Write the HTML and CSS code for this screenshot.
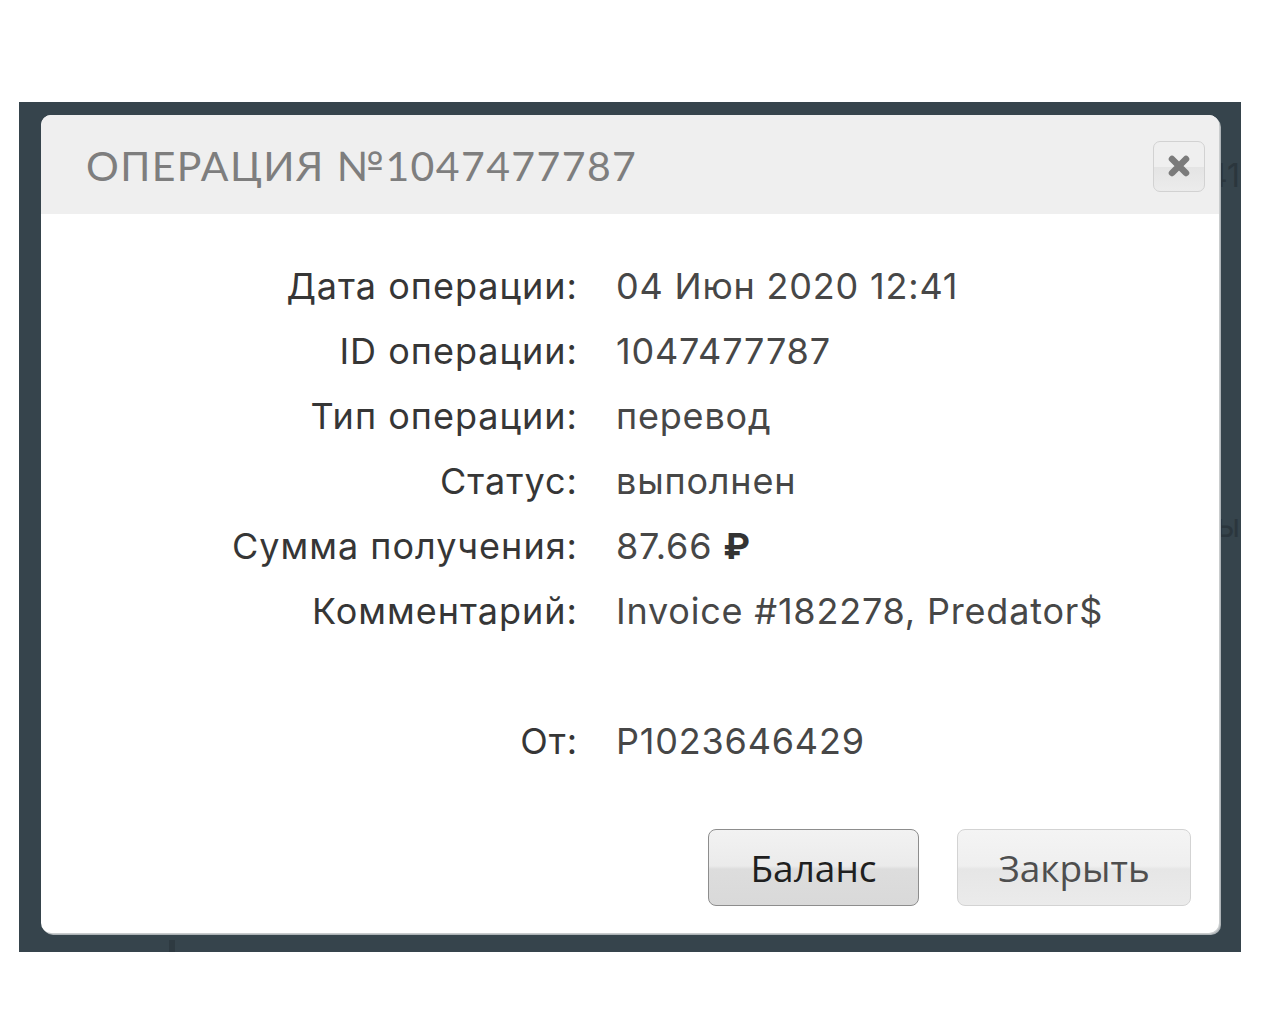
FILE: index.html
```html
<!DOCTYPE html>
<html lang="ru">
<head>
<meta charset="utf-8">
<title>Операция №1047477787</title>
<link rel="stylesheet" href="styles.css">
</head>
<body>
<div class="backdrop">
  <span class="behind behind-a">41</span>
  <span class="behind behind-b">ы</span>
  <span class="behind-mark"></span>
  <div class="dialog">
    <div class="dialog-header">
      <h1 class="dialog-title">Операция №1047477787</h1>
      <button class="close-btn" aria-label="Закрыть">
        <svg width="28" height="28" viewBox="0 0 28 28"><path d="M7 7L21 21M21 7L7 21" stroke="#7b7b7b" stroke-width="6.5" stroke-linecap="round"/></svg>
      </button>
    </div>
    <div class="dialog-body">
      <dl class="details">
        <dt>Дата операции:</dt><dd>04 Июн 2020 12:41</dd>
        <dt>ID операции:</dt><dd>1047477787</dd>
        <dt>Тип операции:</dt><dd>перевод</dd>
        <dt>Статус:</dt><dd>выполнен</dd>
        <dt>Сумма получения:</dt><dd>87.66 <span class="rub">₽</span></dd>
        <dt>Комментарий:</dt><dd>Invoice #182278, Predator$</dd>
        <dt class="empty"></dt><dd class="empty"></dd>
        <dt>От:</dt><dd>P1023646429</dd>
      </dl>
      <div class="actions">
        <button class="btn btn-primary">Баланс</button>
        <button class="btn btn-secondary">Закрыть</button>
      </div>
    </div>
  </div>
</div>
</body>
</html>
```

FILE: styles.css
```css
html, body {
  margin: 0;
  padding: 0;
  background: #ffffff;
}
body {
  padding-top: 102px;
  padding-left: 19px;
}
.backdrop {
  position: relative;
  width: 1222px;
  height: 850px;
  box-sizing: border-box;
  background: #36444c;
  padding: 13px 22px 0 22px;
}
.behind {
  position: absolute;
  z-index: 0;
  font-family: Inter, sans-serif;
  font-size: 32px;
  line-height: 40px;
  color: #2b363d;
  right: 1px;
  white-space: nowrap;
}
.behind-a { top: 54px; }
.behind-b { top: 404px; }
.behind-mark {
  position: absolute;
  left: 150px;
  bottom: 0;
  width: 6px;
  height: 12px;
  background: #2e3a41;
}
.dialog {
  position: relative;
  z-index: 1;
  width: 1178px;
  height: 818px;
  background: #ffffff;
  border-radius: 10px;
  overflow: hidden;
  box-shadow: 1px 1px 0 #c9cccd, 2px 2px 0 #aeb4b7;
  display: flex;
  flex-direction: column;
}
.dialog-header {
  height: 99px;
  background: #efefef;
  display: flex;
  align-items: center;
  justify-content: space-between;
  padding: 0 14px 0 45px;
  flex: none;
}
.dialog-title {
  margin: 0;
  font-family: "Lato", "Liberation Sans", sans-serif;
  font-weight: 400;
  font-size: 41px;
  letter-spacing: 1.4px;
  text-transform: uppercase;
  color: #7e7e7e;
  margin-top: 2px;
}
.close-btn {
  width: 52px;
  height: 51px;
  border: 1px solid #d2d2d2;
  border-radius: 7px;
  background: linear-gradient(#efefef 0%, #efefef 50%, #e4e4e4 51%, #ececec 100%);
  display: flex;
  align-items: center;
  justify-content: center;
  padding: 0;
  margin-top: 3px;
}
.close-btn svg { filter: blur(0.7px); }
.dialog-body {
  flex: 1;
  display: flex;
  flex-direction: column;
  padding: 40px 28px 27px 0;
}
.details {
  margin: 0;
  display: grid;
  grid-template-columns: 537px 1fr;
  column-gap: 38px;
  font-family: Inter, "Open Sans", sans-serif;
  font-size: 36px;
  line-height: 65px;
}
.details dt {
  text-align: right;
  color: #363636;
  letter-spacing: 1px;
}
.details dd {
  margin: 0;
  color: #474747;
  letter-spacing: 0.8px;
}
.details .empty { height: 65px; }
.rub { font-weight: 700; color: #333; }
.actions {
  margin-top: auto;
  display: flex;
  justify-content: flex-end;
  gap: 38px;
}
.btn {
  height: 77px;
  border-radius: 8px;
  font-family: "Open Sans", "Noto Sans", sans-serif;
  font-size: 37px;
  padding: 0;
  cursor: pointer;
}
.btn-primary {
  width: 211px;
  border: 1px solid #8d8d8d;
  color: #1f1f1f;
  background: linear-gradient(#f2f2f2 0%, #ebebeb 48%, #dddddd 52%, #d9d9d9 100%);
}
.btn-secondary {
  width: 234px;
  border: 1px solid #d3d3d3;
  color: #4e4e4e;
  background: linear-gradient(#f4f4f4 0%, #efefef 48%, #e6e6e6 52%, #ebebeb 100%);
}
```
